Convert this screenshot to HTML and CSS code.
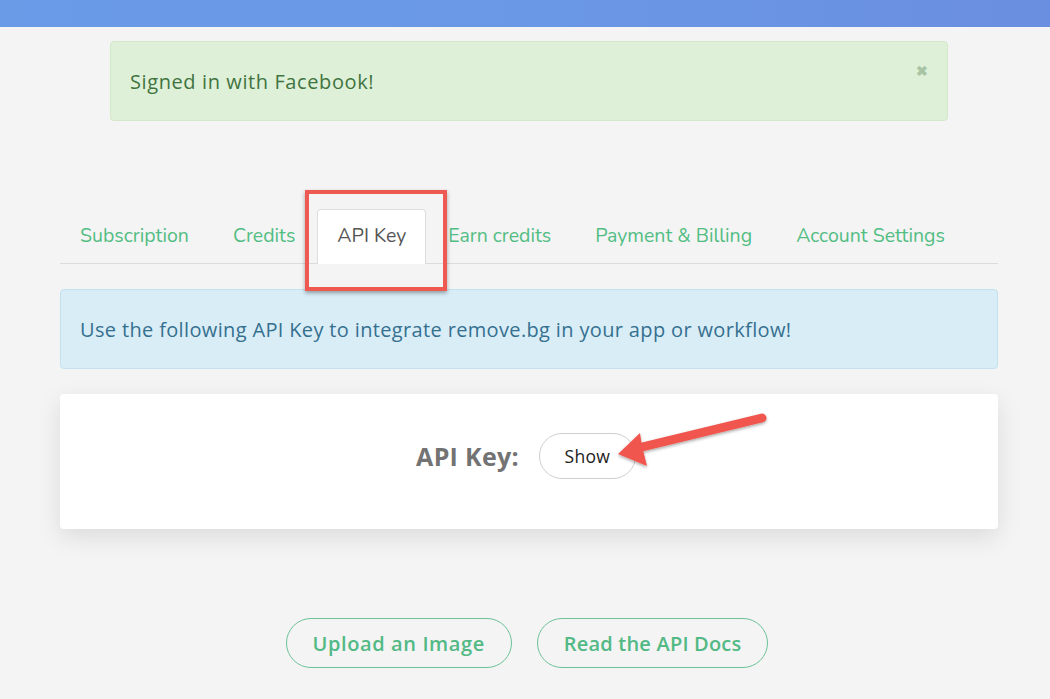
FILE: index.html
```html
<!DOCTYPE html>
<html>
<head>
<meta charset="utf-8">
<link rel="stylesheet" href="styles.css">
</head>
<body>
<div class="banner"></div>
<main class="page">
  <div class="alert">
    <span class="alert-text">Signed in with Facebook!</span>
    <span class="alert-close">&#x2716;</span>
  </div>

  <nav class="tabs">
    <a class="tab">Subscription</a>
    <a class="tab">Credits</a>
    <a class="tab active">API Key</a>
    <a class="tab">Earn credits</a>
    <a class="tab">Payment &amp; Billing</a>
    <a class="tab">Account Settings</a>
    <div class="highlight"></div>
  </nav>

  <div class="info">Use the following API Key to integrate remove.bg in your app or workflow!</div>

  <div class="card">
    <span class="key-label">API Key:</span>
    <button class="show-btn">Show</button>
    <svg class="arrow" width="180" height="80" viewBox="0 0 180 80">
      <defs>
        <filter id="sh" x="-20%" y="-40%" width="140%" height="180%">
          <feDropShadow dx="0" dy="1.5" stdDeviation="1.5" flood-color="#000" flood-opacity="0.35"/>
        </filter>
      </defs>
      <g filter="url(#sh)" fill="#f0564d">
        <path d="M162 18 L42 47" stroke="#f0564d" stroke-width="9" stroke-linecap="round"/>
        <path d="M18 54 L40 33 L42 46 L47 66 Z"/>
      </g>
    </svg>
  </div>

  <div class="actions">
    <a class="pill">Upload an Image</a>
    <a class="pill pill-docs">Read the API Docs</a>
  </div>
</main>
</body>
</html>
```

FILE: styles.css
```css
* { box-sizing: border-box; }
html, body { margin: 0; padding: 0; }
body {
  background: #f4f4f4;
  font-family: "Open Sans", "Liberation Sans", sans-serif;
  width: 1050px;
  height: 699px;
  overflow: hidden;
}
.banner {
  height: 27px;
  background: linear-gradient(90deg, #6a9be7 0%, #6a98e6 50%, #6a8ee0 100%);
}
.page {
  width: 938px;
  margin-left: 60px;
}
.alert {
  margin: 14px 50px 0 50px;
  height: 80px;
  background: #dff0d8;
  border: 1px solid #d3e8c8;
  border-radius: 4px;
  display: flex;
  align-items: center;
  justify-content: space-between;
  padding: 0 19px 0 19px;
  position: relative;
}
.alert-text {
  color: #3f7440;
  font-size: 20px;
  letter-spacing: 0.6px;
}
.alert-close {
  color: #a9c4a4;
  font-size: 14px;
  font-weight: 700;
  align-self: flex-start;
  margin-top: 19px;
}
.tabs {
  margin-top: 87px;
  display: flex;
  align-items: flex-end;
  border-bottom: 1px solid #dcdcdc;
  height: 56px;
  position: relative;
}
.tab {
  font-family: "Nunito", "Lato", sans-serif;
  font-size: 19.5px;
  color: #52bd83;
  padding: 0 21px 4px 21px;
  height: 54px;
  line-height: 50px;
  border: 1px solid transparent;
  border-bottom: none;
  border-radius: 4px 4px 0 0;
  margin-bottom: -1px;
  white-space: nowrap;
}
.tab:first-child { margin-left: -2px; }
.tab.active {
  background: #fff;
  color: #555;
  border-color: #dedede;
  height: 55px;
  padding: 0 19px 4px 19px;
  line-height: 51px;
}
.highlight {
  position: absolute;
  left: 245px;
  top: -18px;
  width: 142px;
  height: 101px;
  border: 4px solid #ee5a52;
  box-shadow: 0 2px 4px rgba(0,0,0,0.35);
}
.info {
  margin-top: 25px;
  height: 80px;
  background: #d9edf7;
  border: 1px solid #c4e2ee;
  border-radius: 4px;
  color: #35708f;
  font-size: 20px;
  letter-spacing: 0.35px;
  display: flex;
  align-items: center;
  padding-left: 19px;
}
.card {
  margin-top: 25px;
  height: 135px;
  background: #fff;
  border-radius: 4px;
  box-shadow: 0 8px 24px rgba(0,0,0,0.10);
  display: flex;
  align-items: center;
  justify-content: center;
  gap: 20px;
  padding-bottom: 11px;
  padding-right: 6px;
  position: relative;
}
.key-label {
  font-size: 25px;
  font-weight: 700;
  color: #737373;
  letter-spacing: 0.3px;
}
.show-btn {
  font-family: "Open Sans", "Liberation Sans", sans-serif;
  font-size: 17.5px;
  letter-spacing: 0.3px;
  color: #222;
  background: #fff;
  border: 1px solid #cfcfcf;
  border-radius: 23px;
  width: 97px;
  height: 46px;
  padding: 0;
}
.arrow {
  position: absolute;
  left: 540px;
  top: 6px;
}
.actions {
  margin-top: 89px;
  display: flex;
  justify-content: center;
  gap: 25px;
  padding-right: 4px;
}
.pill {
  border: 1px solid #6cc397;
  color: #52b985;
  border-radius: 25px;
  height: 50px;
  display: flex;
  align-items: center;
  font-size: 20px;
  font-weight: 600;
  padding: 0 26px;
  letter-spacing: 0.6px;
}
.pill-docs {
  letter-spacing: 0.2px;
}
```
